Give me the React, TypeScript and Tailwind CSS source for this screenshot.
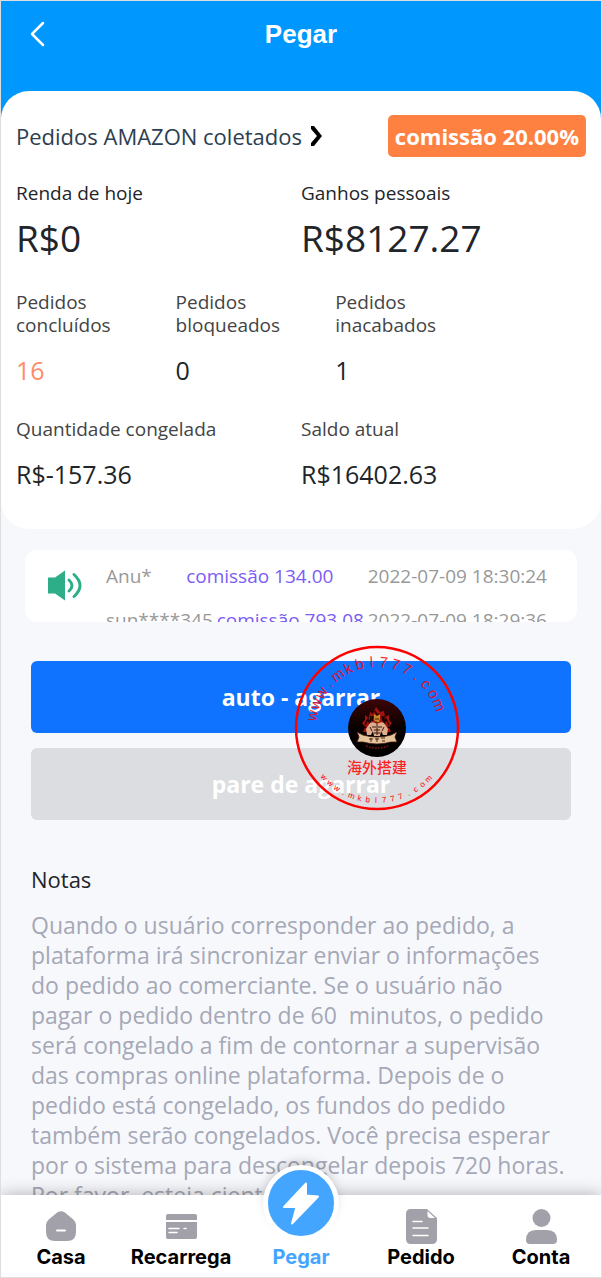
import { useState } from 'react';

const orders = [
  { label: 'Pedidos concluídos', value: '16', color: 'text-[#ff8c69]' },
  { label: 'Pedidos bloqueados', value: '0', color: 'text-[#212529]' },
  { label: 'Pedidos inacabados', value: '1', color: 'text-[#212529]' },
];

const ticker = [
  { user: 'Anu*', amount: '134.00', date: '2022-07-09 18:30:24' },
  { user: 'sun****345', amount: '793.08', date: '2022-07-09 18:29:36' },
];

const notes =
  'Quando o usuário corresponder ao pedido, a plataforma irá sincronizar enviar o informações do pedido ao comerciante. Se o usuário não pagar o pedido dentro de 60 \u00a0minutos, o pedido será congelado a fim de contornar a supervisão das compras online plataforma. Depois de o pedido está congelado, os fundos do pedido também serão congelados. Você precisa esperar por o sistema para descongelar depois 720 horas. Por favor, esteja ciente.';

function HomeIcon() {
  return (
    <svg width="30" height="30" viewBox="0 0 30 30" fill="#a2a1aa">
      <path d="M11.500 1.300Q15-1 18.500 1.300L27 8.300Q30 11 30 14V21Q30 30 21 30H9Q0 30 0 21V14Q0 11 3 8.300Z" />
      <path d="M11 19.500H19" stroke="#fff" strokeWidth="2" strokeLinecap="round" />
    </svg>
  );
}

function CardIcon() {
  return (
    <svg width="31" height="25" viewBox="0 0 31 25" fill="#a2a1aa">
      <path d="M0 6V2Q0 0 2 0H29Q31 0 31 2V6Z" />
      <path d="M0 8H31V23Q31 25 29 25H2Q0 25 0 23Z" />
      <path d="M3 14.500H13M18 14.500H20M3 18.500H11" stroke="#fff" strokeWidth="1.500" strokeLinecap="round" />
    </svg>
  );
}

function OrderIcon() {
  return (
    <svg width="31" height="35" viewBox="0 0 31 35" fill="#a2a1aa">
      <path d="M5 0H21L31 9V30Q31 35 26 35H5Q0 35 0 30V5Q0 0 5 0Z" />
      <path d="M21.500 2V6Q21.500 9 24.500 9H29Z" fill="#fff" />
      <path d="M7 12.500H16M7 19H22M7 26.500H22" stroke="#fff" strokeWidth="1.500" strokeLinecap="round" />
    </svg>
  );
}

function UserIcon() {
  return (
    <svg width="31" height="35" viewBox="0 0 31 35" fill="#a2a1aa">
      <circle cx="15.500" cy="9" r="9" />
      <path d="M0 31Q0 21 10 21H21Q31 21 31 31Q31 35 27 35H4Q0 35 0 31Z" />
    </svg>
  );
}

function BoltIcon() {
  return (
    <svg width="38" height="46" viewBox="0 0 38 46" fill="#fff" stroke="#fff" strokeWidth="2" strokeLinejoin="round">
      <path d="M24 3.500L2 27H14.500L10 43.500L36 16.500L24 15.500Z" />
    </svg>
  );
}

const tabs = [
  { label: 'Casa', icon: <HomeIcon /> },
  { label: 'Recarrega', icon: <CardIcon /> },
  { label: 'Pegar', icon: <BoltIcon />, main: true },
  { label: 'Pedido', icon: <OrderIcon /> },
  { label: 'Conta', icon: <UserIcon /> },
];

// Round seal, the letters are spread evenly along the ring
function Seal() {
  const letters = 'www.mkbl777.com'.split('');
  return (
    <svg
      className="pointer-events-none absolute -top-4 left-[263px] font-normal"
      width="166"
      height="166"
      viewBox="-83 -83 166 166"
      fill="#f00"
      textAnchor="middle"
    >
      <circle r="81" fill="none" stroke="#f00" strokeWidth="2.500" />
      <g fontFamily="'Liberation Sans', sans-serif" fontSize="15" fillOpacity="0.85">
        {letters.map((c, i) => (
          <text key={i} y="-61" transform={`rotate(${-79 + i * 10.6})`}>
            {c}
          </text>
        ))}
      </g>
      <g fontFamily="'Liberation Sans', sans-serif" fontSize="8">
        {letters.map((c, i) => (
          <text key={i} y="75" transform={`rotate(${47 - i * 6.6})`}>
            {c}
          </text>
        ))}
      </g>
      <text y="45" fontFamily="'Noto Sans CJK SC', sans-serif" fontSize="15" fontWeight="500" fillOpacity="0.85">
        海外搭建
      </text>
      <defs>
        <linearGradient id="disc" x1="0" y1="0" x2="0" y2="1">
          <stop offset="0" stopColor="#3d0505" />
          <stop offset="0.5" stopColor="#080101" />
          <stop offset="1" stopColor="#000" />
        </linearGradient>
      </defs>
      <circle r="29" fill="url(#disc)" />
      {/* flames */}
      <path d="M-14 4L-12-1L-15-5L-12-8L-12-13L-8-10L-7-16L-4-14L-1-21L3-16L7-17L8-11L12-13L12-8L15-5L12-1L14 4Z" fill="#a3130f" />
      <path d="M-12-3L-9-9L-7-4L-6-12M-4-12L-5-7M5-12L6-7M12-3L9-9L7-4L7-12M-14 0L-11-1M14 0L11-1M-2-17L0-13L3-14" fill="none" stroke="#1a0202" strokeWidth="1.500" />
      {/* crowned fighter */}
      <path d="M-3-9L-3-14L0-12L3-14L3-9L2-6H-2Z" fill="#c98a2b" />
      <path d="M-2-9H2M-1-7V-5" stroke="#4a2007" strokeWidth="1" />
      <path d="M-7-5Q-4-7 0-4Q4-7 7-5L11 1L10 7H6L4 3L3 8H-3L-4 3L-6 7H-10L-11 1Z" fill="#dcae8c" />
      <path d="M0-4V7M-7-1L-5 3M7-1L5 3M-5-1H-1M1-1H5M-3 2H3M-3 5H3" stroke="#3a1712" strokeWidth="1" />
      {/* ribbon */}
      <path d="M-20 4L-14 7Q0 11 14 7L20 4L18 9L20 14L14 14Q0 18-14 14L-20 14L-18 9Z" fill="#e6c49c" stroke="#38170c" strokeWidth="0.800" />
      <path d="M-8 11H-4M-6 10V14M-2 11H2M0 10V14M4 10H8M5 13H8" stroke="#4a2416" strokeWidth="1" />
      <path d="M-11 18Q0 22 11 18" fill="none" stroke="#7c0e0e" strokeWidth="1.500" strokeDasharray="2 1" />
    </svg>
  );
}

export default function App() {
  const [active, setActive] = useState('Pegar');

  return (
    <div className="flex h-screen flex-col overflow-hidden border border-[#dedede] bg-[#f7f8fc] font-['Open_Sans',sans-serif] text-[#212529]">
      <main className="min-h-0 flex-1 overflow-hidden">
        {/* Header */}
        <header className="grid h-[120px] grid-cols-3 items-start bg-[#0097ff] text-white">
          <button type="button" aria-label="Voltar" className="flex h-[66px] w-16 items-center pl-7">
            <svg width="16" height="26" viewBox="0 0 16 26" fill="none" stroke="#fff" strokeWidth="2.500" strokeLinecap="round" strokeLinejoin="round">
              <path d="M14 2L3 13L14 24" />
            </svg>
          </button>
          <h1 className="text-center font-['Liberation_Sans',sans-serif] text-[26px] leading-[66px] font-bold">Pegar</h1>
        </header>

        {/* Summary */}
        <section className="-mt-[30px] rounded-[28px] bg-white px-[15px] pt-6 pb-[37px]">
          <div className="flex items-center justify-between">
            <a href="#pedidos" className="flex items-center gap-2 text-[22px] leading-[42px] text-[#2c3e50]">
              Pedidos AMAZON coletados
              <svg width="12" height="20" viewBox="0 0 12 20" fill="#000">
                <path d="M1 0H4L12 10L4 20H1V17L7 10L1 3Z" />
              </svg>
            </a>
            <span className="rounded-[5px] bg-[#ff8142] px-[7px] text-[22px] leading-[42px] font-bold text-white">
              comissão 20.00%
            </span>
          </div>

          <dl className="mt-6 grid grid-cols-2">
            <div>
              <dt className="text-[19px] leading-6">Renda de hoje</dt>
              <dd className="mt-2 text-[37px] leading-[50px]">R$0</dd>
            </div>
            <div>
              <dt className="text-[19px] leading-6">Ganhos pessoais</dt>
              <dd className="mt-2 text-[37px] leading-[50px]">R$8127.27</dd>
            </div>
          </dl>

          <dl className="mt-7 flex">
            {orders.map((order) => (
              <div key={order.label} className="w-[28%] pr-10">
                <dt className="text-[19px] leading-[23px] text-[#444]">{order.label}</dt>
                <dd className={`mt-[15px] text-[25px] leading-9 ${order.color}`}>{order.value}</dd>
              </div>
            ))}
          </dl>

          <dl className="mt-[29px] grid grid-cols-2">
            <div>
              <dt className="text-[19px] leading-6 text-[#444]">Quantidade congelada</dt>
              <dd className="mt-[15px] text-[25px] leading-9">R$-157.36</dd>
            </div>
            <div>
              <dt className="text-[19px] leading-6 text-[#444]">Saldo atual</dt>
              <dd className="mt-[15px] text-[25px] leading-9">R$16402.63</dd>
            </div>
          </dl>
        </section>

        {/* Ticker */}
        <section className="mx-6 mt-[21px] flex h-[72px] overflow-hidden rounded-xl bg-white pr-[30px] pl-[22px]">
          <svg className="mt-5 mr-6 shrink-0" width="35" height="31" viewBox="0 0 35 31" fill="#2dae89">
            <path d="M1 7.500H8L18 0.500V30.500L8 23.500H1Z" />
            <path d="M22 10Q28 15.500 22 21M27 4.500Q39 15.500 27 26.500" fill="none" stroke="#2dae89" strokeWidth="3" strokeLinecap="round" />
          </svg>
          <ul className="min-w-0 flex-1 pt-1 text-[19px] leading-[44px] whitespace-nowrap text-[#999]">
            {ticker.map((row) => (
              <li key={row.date} className="flex justify-between">
                <span>{row.user}</span>
                <span className="text-[#7b5cf5]">comissão {row.amount}</span>
                <span>{row.date}</span>
              </li>
            ))}
          </ul>
        </section>

        {/* Actions */}
        <section className="relative mx-[30px] mt-[39px] flex flex-col gap-[15px] text-[23px] font-bold text-white">
          <button type="button" className="h-[72px] rounded-md bg-[#0f73ff]">
            auto - agarrar
          </button>
          <button type="button" className="h-[72px] rounded-md bg-[#dcdde0]">
            pare de agarrar
          </button>
          <Seal />
        </section>

        {/* Notes */}
        <section className="mx-[30px] mt-[43px]">
          <h2 className="text-[22px] leading-8">Notas</h2>
          <p className="mt-[15px] pr-1 text-[23px] leading-[30px] text-[#a5a8b6]">{notes}</p>
        </section>
      </main>

      {/* Bottom navigation */}
      <nav className="relative z-10 grid h-[82px] shrink-0 grid-cols-5 bg-white shadow-[0_0_16px_rgba(0,0,0,0.3)]">
        {tabs.map((tab) => (
          <button
            key={tab.label}
            type="button"
            onClick={() => setActive(tab.label)}
            className={`flex h-[82px] flex-col items-center justify-end pb-2 font-['Inter',sans-serif] text-[20px] leading-6 font-bold ${
              active === tab.label ? 'text-[#44a5ff]' : 'text-black'
            }`}
          >
            {tab.main ? (
              <span className="mb-1 flex size-[76px] shrink-0 items-center justify-center rounded-full border-5 border-white bg-[#44a5ff] shadow-[0_-6px_12px_-4px_rgba(0,0,0,0.25)]">
                {tab.icon}
              </span>
            ) : (
              <span className="flex h-[38px] items-center">{tab.icon}</span>
            )}
            {tab.label}
          </button>
        ))}
      </nav>
    </div>
  );
}
